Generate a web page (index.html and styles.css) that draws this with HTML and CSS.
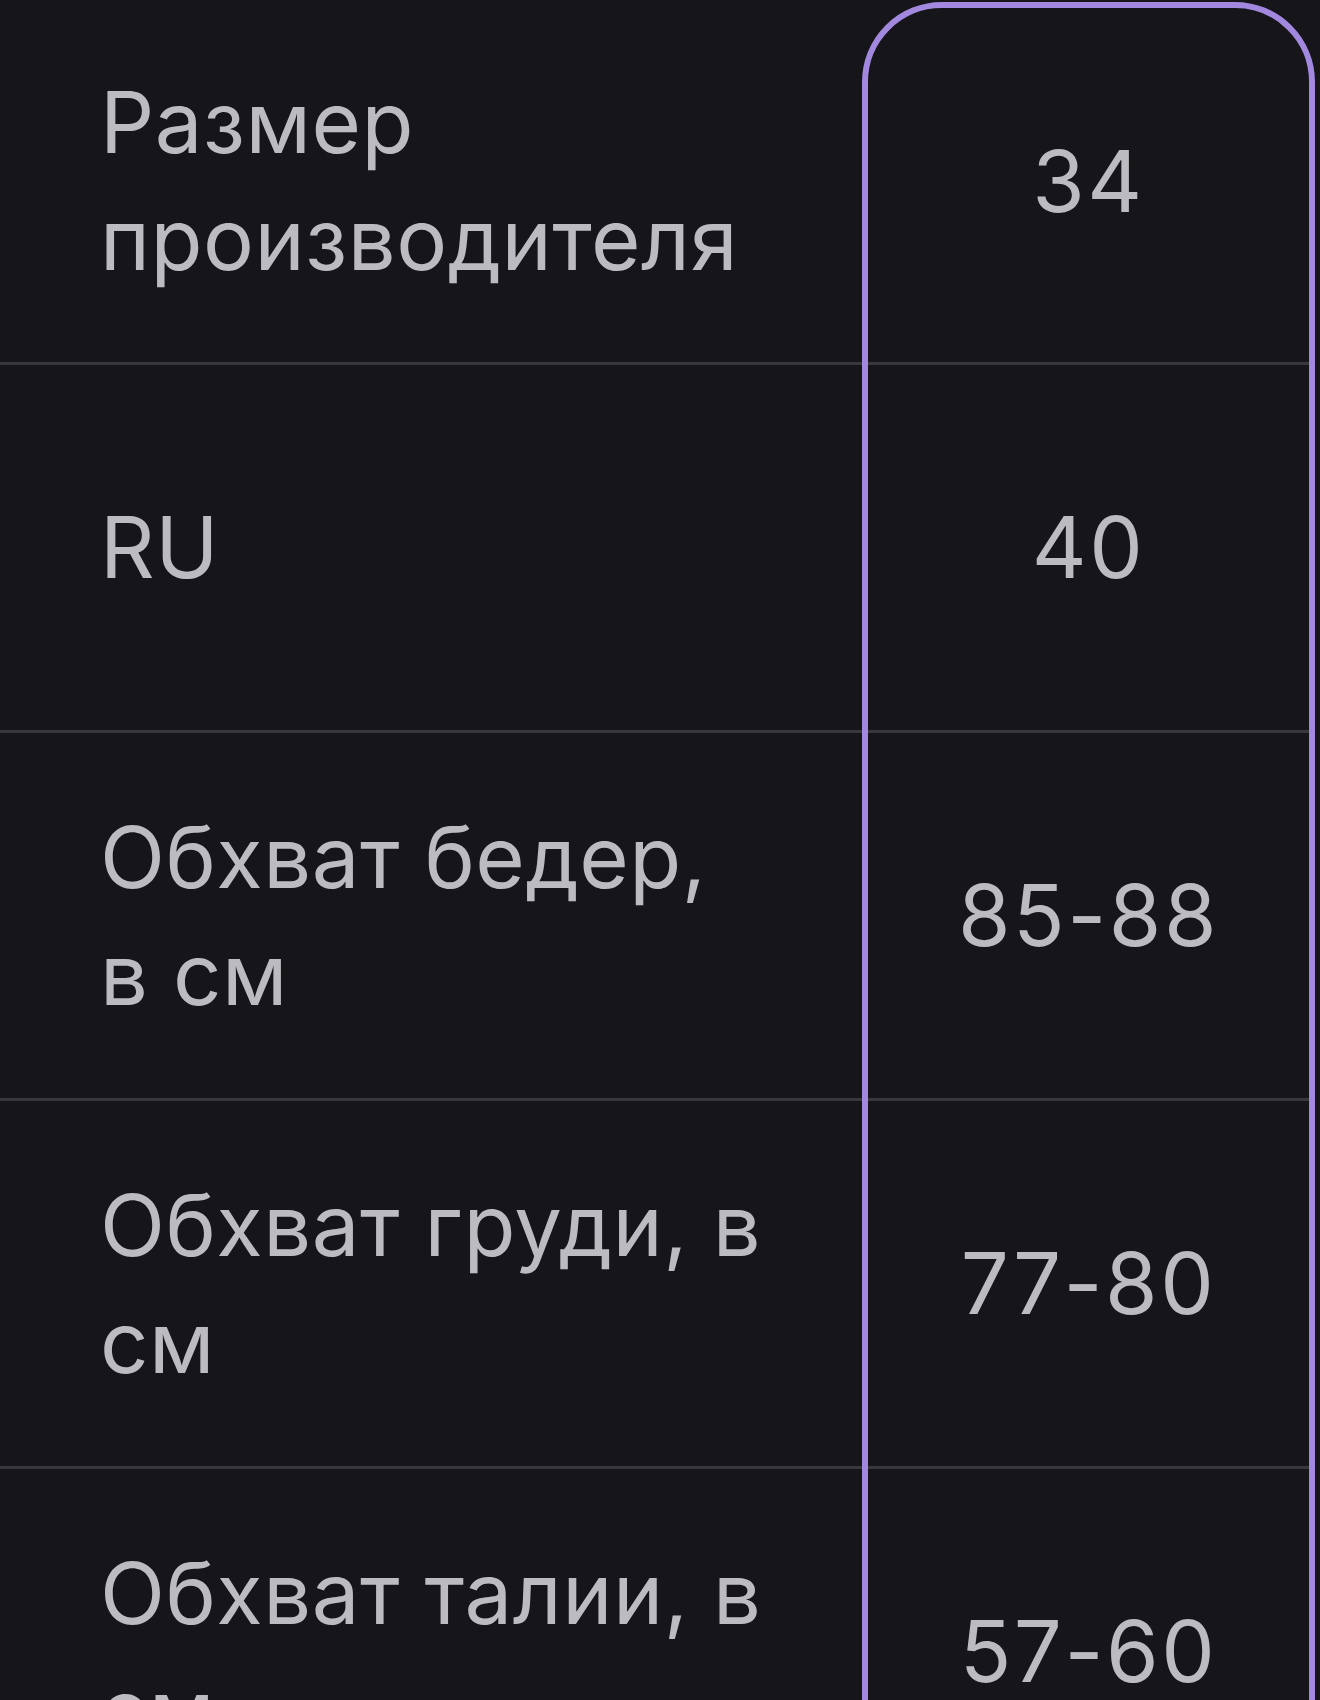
FILE: index.html
```html
<!DOCTYPE html>
<html lang="ru">
<head>
<meta charset="utf-8">
<title>Таблица размеров</title>
<link rel="stylesheet" href="styles.css">
</head>
<body>
<div class="sheet">
  <div class="size-table">
    <div class="row first">
      <div class="label">Размер производителя</div>
      <div class="value">34</div>
    </div>
    <div class="row">
      <div class="label">RU</div>
      <div class="value">40</div>
    </div>
    <div class="row">
      <div class="label">Обхват бедер, в см</div>
      <div class="value">85-88</div>
    </div>
    <div class="row">
      <div class="label">Обхват груди, в см</div>
      <div class="value">77-80</div>
    </div>
    <div class="row">
      <div class="label">Обхват талии, в см</div>
      <div class="value">57-60</div>
    </div>
  </div>
  <div class="highlight"></div>
</div>
</body>
</html>
```

FILE: styles.css
```css
html, body {
  margin: 0;
  padding: 0;
  background: #16151a;
}
body {
  width: 1320px;
  height: 1700px;
  overflow: hidden;
  font-family: Inter, "Noto Sans", "Liberation Sans", sans-serif;
  color: #bcbbc1;
}
.sheet {
  position: relative;
  width: 1320px;
  height: 1700px;
}
.size-table {
  width: 1312px;
  display: flex;
  flex-direction: column;
}
.row {
  display: grid;
  grid-template-columns: 865px 447px;
  height: 368px;
  box-sizing: border-box;
  border-bottom: 3px solid #38373d;
  align-items: center;
}
.row.first {
  height: 365px;
}
.label {
  padding-left: 100px;
  padding-right: 100px;
  font-size: 85px;
  line-height: 117px;
  letter-spacing: 0.5px;
}
.value {
  text-align: center;
  font-size: 85px;
  line-height: 117px;
  letter-spacing: 2.5px;
}
.highlight {
  position: absolute;
  left: 862px;
  top: 2px;
  width: 453px;
  height: 1800px;
  box-sizing: border-box;
  border: 6px solid #a288df;
  border-radius: 80px;
  pointer-events: none;
}
```
